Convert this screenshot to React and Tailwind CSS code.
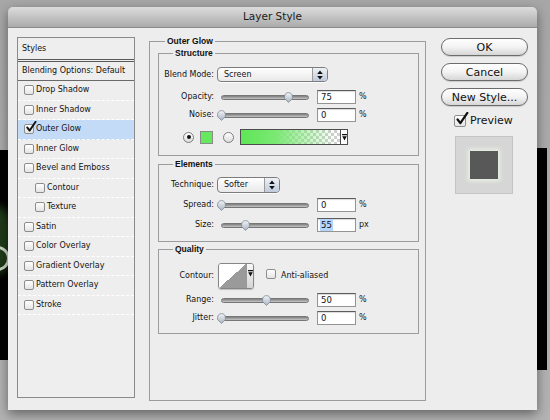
import React from "react";

const styleRows = [
  { name: "Drop Shadow" },
  { name: "Inner Shadow" },
  { name: "Outer Glow", checked: true, active: true },
  { name: "Inner Glow" },
  { name: "Bevel and Emboss" },
  { name: "Contour", sub: true },
  { name: "Texture", sub: true },
  { name: "Satin" },
  { name: "Color Overlay" },
  { name: "Gradient Overlay" },
  { name: "Pattern Overlay" },
  { name: "Stroke" },
];

const CheckMark = ({ className }) => (
  <svg viewBox="0 0 12 12" className={className}>
    <path
      d="M2.2 6.4 L4.6 9.6 L10.6 0.8"
      fill="none"
      stroke="#111"
      strokeWidth="1.9"
      strokeLinecap="round"
      strokeLinejoin="round"
    />
  </svg>
);

const Checkbox = ({ checked, big }) => (
  <span
    className={`relative inline-block shrink-0 rounded-[2px] border border-[#8d8d8d] bg-gradient-to-b from-white to-[#e4e4e4] ${
      big ? "w-[12px] h-[12px]" : "w-[10px] h-[10px]"
    }`}
  >
    {checked && (
      <CheckMark
        className={
          big
            ? "absolute left-[0px] top-[-4px] w-[14px] h-[14px]"
            : "absolute left-[0px] top-[-4px] w-[12px] h-[12px]"
        }
      />
    )}
  </span>
);

const ArrowDown = () => (
  <svg width="5" height="7" viewBox="0 0 5 7">
    <path d="M0 0 H5 V1.2 H0Z M0.2 2.2 H4.8 L2.5 6.6Z" fill="#111" />
  </svg>
);

const Stepper = () => (
  <div className="w-[15px] h-full border-l border-[#9a9a9a] bg-gradient-to-b from-[#eef2f7] to-[#bfcadb] flex items-center justify-center">
    <svg width="6" height="10" viewBox="0 0 6 10">
      <path d="M3 0.5 L5.8 4 H0.2Z M3 9.5 L5.8 6 H0.2Z" fill="#111" />
    </svg>
  </div>
);

const Select = ({ value, width, height }) => (
  <div
    className={`flex items-center rounded-[4px] border border-[#7c7c7c] bg-gradient-to-b from-white to-[#e9e9e9] overflow-hidden shadow-[0_1px_0_rgba(255,255,255,0.8)] ${width} ${height}`}
  >
    <span className="flex-1 pl-[6px] text-[8px]">{value}</span>
    <Stepper />
  </div>
);

const Thumb = ({ left }) => (
  <svg
    width="9"
    height="11"
    viewBox="0 0 9 11"
    className="absolute top-[1px]"
    style={{ left }}
  >
    <defs>
      <linearGradient id="tg" x1="0" y1="0" x2="0" y2="1">
        <stop offset="0" stopColor="#f2f5f9" />
        <stop offset="1" stopColor="#a9b4c2" />
      </linearGradient>
    </defs>
    <path
      d="M4.5 0.6 C7 0.6 8.4 2.4 8.4 4.8 L8.4 6.6 L4.5 10.4 L0.6 6.6 L0.6 4.8 C0.6 2.4 2 0.6 4.5 0.6Z"
      fill="url(#tg)"
      stroke="#7f8894"
      strokeWidth="0.8"
    />
  </svg>
);

const Slider = ({ pos }) => (
  <div className="relative w-[96px] h-[13px] flex items-center">
    <div className="mx-[4px] flex-1 h-[5px] rounded-full border border-[#777] bg-gradient-to-b from-[#7e7e7e] to-[#c6c6c6]" />
    <Thumb left={`${Math.round(pos * 89) - 0.5}px`} />
  </div>
);

const Field = ({ value, unit, selected }) => (
  <div className="flex items-center ml-[4px]">
    <div className="w-[39px] h-[14px] bg-white border border-[#949494] border-t-[#5c5c5c] shadow-[inset_0_1px_1px_rgba(0,0,0,0.15)] pl-[2px] flex items-center text-[8.5px]">
      <span className={selected ? "bg-[#b4d4fc] px-[1px]" : "px-[1px]"}>{value}</span>
    </div>
    <span className="ml-[3px] text-[8px]">{unit}</span>
  </div>
);

const Row = ({ label, className, children }) => (
  <div className={`flex items-center ${className}`}>
    <span className="w-[55px] text-right text-[8px]">{label}</span>
    <div className="ml-[3px] flex items-center">{children}</div>
  </div>
);

const Group = ({ title, legendClass, className, children }) => (
  <fieldset className={`border border-[#9c9c9c] ${className}`}>
    <legend
      className={`px-[2px] h-[10px] leading-[10px] font-['Liberation_Sans',sans-serif] font-bold text-[8.5px] text-[#111] ${legendClass}`}
    >
      {title}
    </legend>
    {children}
  </fieldset>
);

const Radio = ({ on }) => (
  <span className="w-[11px] h-[11px] rounded-full border border-[#7d7d7d] bg-gradient-to-b from-white to-[#dcdcdc] flex items-center justify-center shrink-0">
    {on && <span className="w-[4px] h-[4px] rounded-full bg-[#111]" />}
  </span>
);

const Button = ({ children }) => (
  <button className="w-[87px] h-[18px] rounded-full border border-[#6c6c6c] bg-gradient-to-b from-white via-[#f3f3f3] to-[#d6d6d6] shadow-[0_1px_1px_rgba(0,0,0,0.15)] text-[11px] leading-none text-[#111] flex items-center justify-center">
    {children}
  </button>
);

export default function App() {
  return (
    <div className="relative w-[550px] h-[420px] overflow-hidden bg-gradient-to-b from-[#a7a7a7] to-[#b3b3b3] font-['DejaVu_Sans',sans-serif] text-[8px] text-[#131313] pt-[7px] pl-[8px]">
      {/* canvas behind the dialog */}
      <div className="absolute left-0 top-[150px] w-[14px] h-[210px] bg-black overflow-hidden">
        <div className="absolute left-[-30px] top-[55px] w-[44px] h-[70px] rounded-full bg-[#1f3b17] blur-[4px]" />
        <div className="absolute left-[-22px] top-[96px] w-[32px] h-[25px] rounded-full border-[3px] border-[#c9d4c2]" />
      </div>
      <div className="absolute left-[530px] top-[148px] w-[17px] h-[222px] bg-black" />

      {/* dialog */}
      <div className="relative w-[529px] h-[403px] rounded-t-[5px] shadow-[0_4px_12px_rgba(0,0,0,0.45)]">
        <div className="h-[21px] rounded-t-[5px] border-b border-[#8a8a8a] bg-gradient-to-b from-[#dcdcdc] to-[#ababab] flex items-center justify-center text-[10.5px] text-[#1c1c1c]">
          Layer Style
        </div>

        <div className="h-[382px] bg-[#ededed] flex items-start pl-[9px] pt-[8px]">
          {/* styles list */}
          <div className="mt-[1px] w-[118px] h-[361px] border border-[#8a8a8a] bg-[#eeeeee]">
            <div className="h-[24px] pl-[4px] flex items-center border-b-[3px] border-double border-[#5a5a5a]">
              Styles
            </div>
            <div className="h-[19px] pl-[4px] flex items-center border-b border-[#6a6a6a]">
              Blending Options: Default
            </div>
            {styleRows.map((r) => (
              <div
                key={r.name}
                className={`h-[19.5px] flex items-center border-b border-dashed border-white ${
                  r.sub ? "pl-[17px]" : "pl-[6px]"
                } ${r.active ? "bg-[#c3dbf6]" : ""}`}
              >
                <Checkbox checked={r.checked} />
                <span className="ml-[2px]">{r.name}</span>
              </div>
            ))}
          </div>

          {/* Outer Glow */}
          <Group title="Outer Glow" legendClass="ml-[15px]" className="ml-[14px] w-[277px] h-[365px]">
            <Group title="Structure" legendClass="ml-[14px]" className="ml-[8px] mt-[2px] w-[261px] h-[108px]">
              <Row label="Blend Mode:" className="mt-[9px]">
                <Select value="Screen" width="w-[111px]" height="h-[15px]" />
              </Row>
              <Row label="Opacity:" className="mt-[8px] h-[14px]">
                <Slider pos={0.75} />
                <Field value="75" unit="%" />
              </Row>
              <Row label="Noise:" className="mt-[4px] h-[14px]">
                <Slider pos={0} />
                <Field value="0" unit="%" />
              </Row>
              <div className="mt-[7px] h-[16px] flex items-center pl-[24px]">
                <Radio on />
                <span className="ml-[6px] w-[13px] h-[13px] border border-[#8a8a8a] bg-[#66e85f]" />
                <span className="ml-[10px]">
                  <Radio />
                </span>
                <div className="ml-[6px] h-[16px] flex border border-[#4d4d4d]">
                  <div className="w-[99px] h-full bg-[linear-gradient(to_right,#5ee656_0%,#7be874_35%,rgba(120,230,110,0)_95%),repeating-conic-gradient(#cfcfcf_0_25%,#ffffff_0_50%)] bg-[length:100%_100%,6px_6px]" />
                  <div className="w-[7px] h-full border-l border-[#4d4d4d] bg-white flex items-center justify-center">
                    <ArrowDown />
                  </div>
                </div>
              </div>
            </Group>

            <Group title="Elements" legendClass="ml-[14px]" className="ml-[8px] mt-[3px] w-[261px] h-[83px]">
              <Row label="Technique:" className="mt-[8px]">
                <Select value="Softer" width="w-[63px]" height="h-[16px]" />
              </Row>
              <Row label="Spread:" className="mt-[5px] h-[14px]">
                <Slider pos={0} />
                <Field value="0" unit="%" />
              </Row>
              <Row label="Size:" className="mt-[6px] h-[14px]">
                <Slider pos={0.27} />
                <Field value="55" unit="px" selected />
              </Row>
            </Group>

            <Group title="Quality" legendClass="ml-[14px]" className="ml-[8px] mt-[2px] w-[261px] h-[90px]">
              <Row label="Contour:" className="mt-[9px] h-[26px]">
                <div className="ml-[1px] w-[36px] h-[26px] flex rounded-[3px] border border-[#858585] overflow-hidden shadow-[0_1px_1px_rgba(0,0,0,0.2)]">
                  <div className="w-[27px] h-full bg-[linear-gradient(to_top_left,#9a9a9a_50%,#ffffff_50%)]" />
                  <div className="flex-1 border-l border-[#9a9a9a] bg-gradient-to-b from-[#f8f8f8] to-[#d4d4d4] flex items-start justify-center pt-[6px]">
                    <ArrowDown />
                  </div>
                </div>
                <span className="ml-[12px]">
                  <Checkbox />
                </span>
                <span className="ml-[5px]">Anti-aliased</span>
              </Row>
              <Row label="Range:" className="mt-[4px] h-[14px]">
                <Slider pos={0.5} />
                <Field value="50" unit="%" />
              </Row>
              <Row label="Jitter:" className="mt-[4px] h-[14px]">
                <Slider pos={0} />
                <Field value="0" unit="%" />
              </Row>
            </Group>
          </Group>

          {/* buttons + preview */}
          <div className="ml-[15px] mt-[2px] flex flex-col">
            <div className="flex flex-col gap-[7px]">
              <Button>OK</Button>
              <Button>Cancel</Button>
              <Button>New Style...</Button>
            </div>
            <div className="mt-[7px] ml-[13px] flex items-center">
              <Checkbox checked big />
              <span className="ml-[4px] text-[11px]">Preview</span>
            </div>
            <div className="mt-[6px] ml-[14px] w-[58px] h-[58px] border border-[#c4c4c4] bg-[#d6d6d6] flex items-center justify-center">
              <div className="w-[28px] h-[28px] bg-[#585858] shadow-[0_0_4px_2px_#e9f1e4]" />
            </div>
          </div>
        </div>
      </div>
    </div>
  );
}
